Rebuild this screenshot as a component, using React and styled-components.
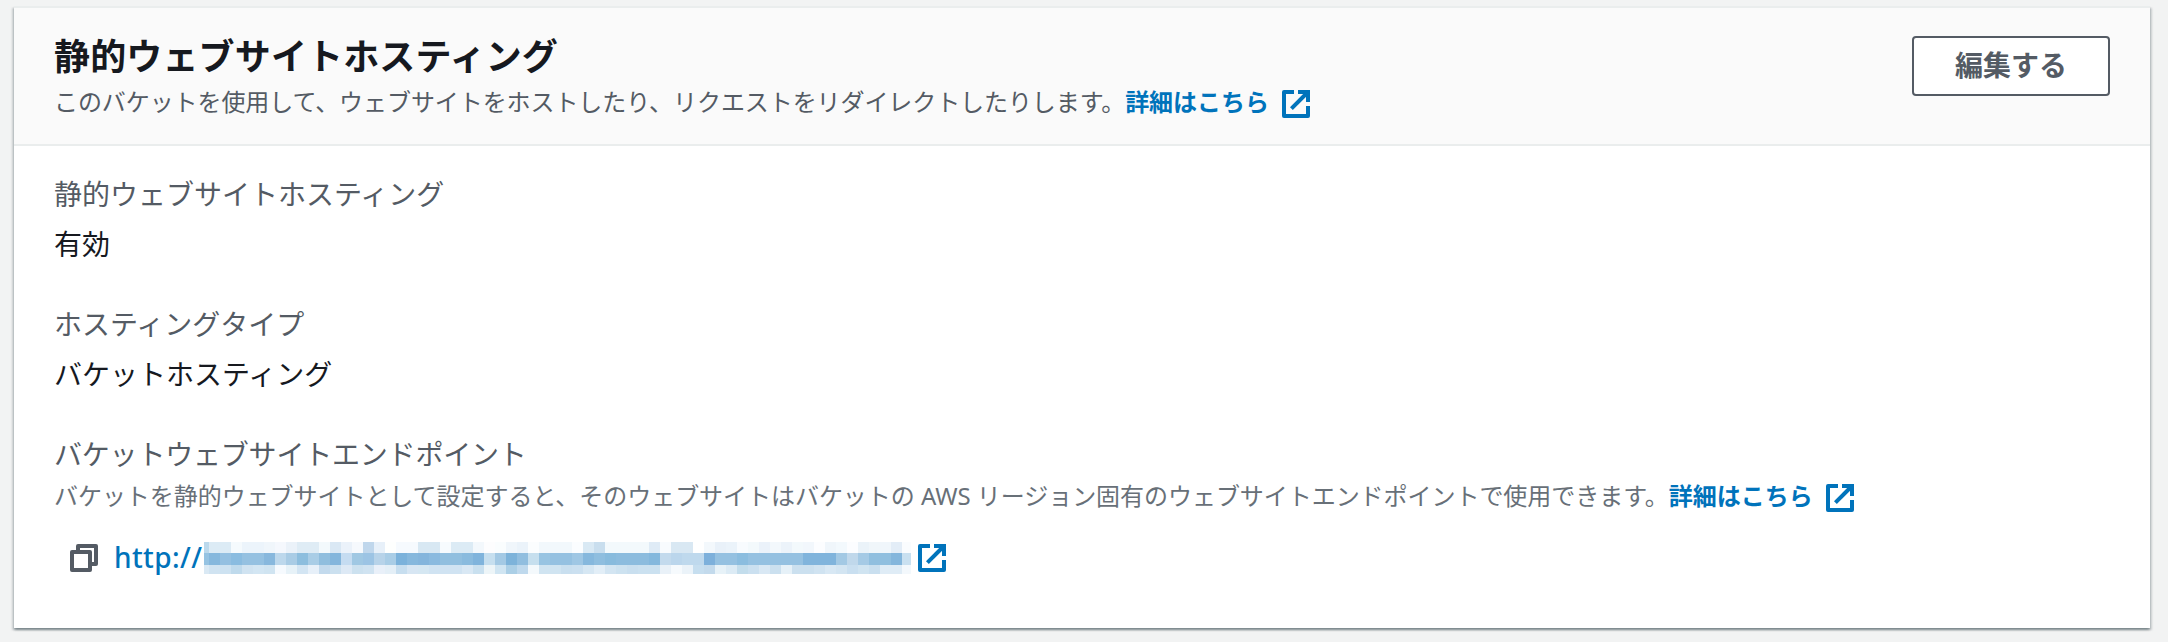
import styled, { createGlobalStyle } from "styled-components";

const GlobalStyle = createGlobalStyle`
  body {
    margin: 0;
    background: #f2f3f3;
    color: #16191f;
    font-family: "Noto Sans", "Noto Sans CJK JP", sans-serif;
    font-size: 28px;
    line-height: 44px;
  }
`;

const Page = styled.main`
  box-sizing: border-box;
  height: 642px;
  padding: 6px 18px 14px 14px;
  overflow: hidden;
`;

const Card = styled.section`
  box-sizing: border-box;
  height: 622px;
  border-top: 2px solid #eaeded;
  background: #fff;
  box-shadow: 0 2px 2px 0 rgba(0, 28, 36, 0.3),
    2px 2px 2px 0 rgba(0, 28, 36, 0.15), -2px 2px 2px 0 rgba(0, 28, 36, 0.15);
`;

const Header = styled.header`
  box-sizing: border-box;
  height: 138px;
  display: flex;
  justify-content: space-between;
  align-items: flex-start;
  padding: 24px 40px 0;
  border-bottom: 2px solid #eaeded;
  background: #fafafa;
`;

const Title = styled.h2`
  margin: 0;
  font-family: "Noto Sans CJK JP", sans-serif;
  font-size: 36px;
  line-height: 44px;
  font-weight: 700;
  letter-spacing: 0.15px;
  white-space: nowrap;
`;

const Description = styled.p`
  display: flex;
  align-items: center;
  margin: ${({ $top }) => $top}px 0 0;
  color: ${({ $muted }) => ($muted ? "#687078" : "#545b64")};
  font-size: 24px;
  line-height: 36px;
  letter-spacing: ${({ $spacing }) => $spacing}px;
  white-space: pre;
`;

const InfoLink = styled.a`
  display: inline-flex;
  align-items: center;
  gap: 11px;
  color: #0073bb;
  font-weight: 700;
  letter-spacing: 0;
  text-decoration: none;
`;

const Text = styled.span`
  padding-bottom: 4px;
`;

const EditButton = styled.button`
  box-sizing: border-box;
  width: 198px;
  height: 60px;
  margin-top: 4px;
  padding: 0 0 4px;
  border: 2px solid #545b64;
  border-radius: 4px;
  background: #fff;
  color: #545b64;
  font-family: "Noto Sans CJK JP", sans-serif;
  font-size: 28px;
  font-weight: 700;
  line-height: 40px;
`;

const Content = styled.div`
  display: flex;
  flex-direction: column;
  gap: 36px;
  padding: 26px 40px 0;
`;

const Label = styled.div`
  color: #545b64;
  letter-spacing: ${({ $spacing = 0 }) => $spacing}px;
`;

const Value = styled.div`
  margin-top: 6px;
`;

const Endpoint = styled.div`
  display: flex;
  align-items: center;
  height: 32px;
  margin: 24px 0 0 14px;
`;

const EndpointLink = styled.a`
  display: flex;
  align-items: center;
  margin-left: 14px;
  color: #0073bb;
  text-decoration: none;
`;

const Scheme = styled.span`
  width: 90px;
  padding-bottom: 2px;
  font-weight: 500;
  letter-spacing: 0.4px;
  white-space: nowrap;
`;

const Mosaic = styled.svg`
  display: block;
  margin-right: 5px;
`;

const Icon = styled.svg`
  display: block;
  flex: none;
  width: 32px;
  height: 32px;
  fill: none;
  stroke: ${({ $color }) => $color};
  stroke-width: 2;
`;

const ExternalIcon = () => (
  <Icon viewBox="0 0 16 16" $color="#0073bb">
    <path d="M9 2h5v5" />
    <path d="M5.7 10.3L14 2" />
    <path d="M14 9v5H2V2h5" strokeLinejoin="round" />
  </Icon>
);

const CopyIcon = () => (
  <Icon viewBox="0 0 16 16" $color="#545b64">
    <path d="M2 5h9v9H2z" strokeLinejoin="round" />
    <path d="M5 5V2h9v9h-3" strokeLinejoin="round" />
  </Icon>
);

// Masked host name: one colour per tile, in three rows.
const maskRows = [
  {
    y: 0,
    height: 11,
    tiles:
      "bcd9ec dcebf5 dcebf5 f5fafd ecf4fb ecf4fb f0f6fb f5f8fd ebf2f9 dfecf5 dfecf5 f3f9fc dae8f4 ebf2fa f6f9fd c0d7ec e7f0f9 fefffe f6fafe f6fafe d8e8f3 d8e8f3 f7fbfe dcebf5 dcebf5 f3f8fc fdfdfe fafdfe f0f6fb ebf3fa fbfdfe f2f8fc f2f8fc f2f8fc fbfdff d9e9f4 c9deee f3f9fc f3f9fc f3f9fc f3f9fc dfebf6 f8fbfe d9e8f3 d9e8f3 ffffff f3f8fc e9f1f9 ebf3fa f8fbfe f3f9fc ebf2fa f3f8fc ecf3fa f3f9fc f2f7fc fcfdff f0f6fb f3f9fd fcfdff ebf3f9 f0f6fa f0f6fb e3edf7 fafcfe",
  },
  {
    y: 11,
    height: 11.5,
    tiles:
      "96c3e2 86b8dd 94c0e1 8abce0 95c1e1 95c1e1 88b8dd bdd8ec a9cce5 8dbede a9cde6 90bede 84b6dc c5dcf1 a0c8e3 9cc4e4 b7d3e9 a9cde6 7bb2db 86b8dd 84b5dc 8abadf 91bfdf 91bfdf 8abbde 80b4dc c6dfef a3c9e4 7db3da 91bedf c6dfee 98c4e2 95c1e1 95c1e1 9fc7e4 86b8dd 8fbedf 88bbdd 8cbcde 8cbcde 8cbcde 84b8dd c3daed bbd6ec bfd9ed bfd9ed 7db0db 95c1e1 95c1e1 8bbddf 95c1e1 95c1e1 95c1e1 95c1e1 95c1e1 80b4dc 80b4dc 80b4dc a3c9e4 c0d8eb a5cae5 90bfdf 90bfdf 84b6dc c9e0f0",
  },
  {
    y: 22.5,
    height: 9.5,
    tiles:
      "dae9f4 d0e3f1 cde2f1 bfdaec d0e3f1 d3e6f3 d0e4f1 f6fafe e7f2f8 d3e5f3 e7f0f9 c3daed cbe0ef dde9f5 cce1ef d0e3f1 e9f0f9 e4eff7 c7deef d7e6f3 d5e7f2 d0e3f2 d0e3f2 d0e3f2 d9e8f4 c9e0ef edf5f8 d0e5f2 abcfe6 bfd9ed f4f9fc d0e4f1 d0e4f1 c9dfef cbe0f0 d6e7f3 e2eef7 d3e5f2 cde2f0 c9dfef cbe1f0 cbe1f0 e9f1f8 f6fafd ebf3f9 c6deef c3daec e7f2f8 dcebf5 c3ddec cbe0f0 d9e8f4 cbe0ef e6f1f8 cbe0ef cbe0ef d0e3f1 d8e8f4 d3e5f2 c9dff0 d0e4f1 c9dfef dfecf6 dfecf6 f3f8fc",
  },
];

const MaskedHost = () => (
  <Mosaic width="707" height="32" shapeRendering="crispEdges">
    {maskRows.map(({ y, height, tiles }) =>
      tiles.split(" ").map((color, i) => (
        <rect
          key={`${y}-${i}`}
          x={i === 0 ? 0 : 5 + (i - 1) * 11}
          y={y}
          width={i === 0 ? 5 : 11}
          height={height}
          fill={`#${color}`}
        />
      ))
    )}
  </Mosaic>
);

const LearnMore = () => (
  <InfoLink>
    <Text>詳細はこちら</Text>
    <ExternalIcon />
  </InfoLink>
);

const fields = [
  { label: "静的ウェブサイトホスティング", value: "有効" },
  { label: "ホスティングタイプ", value: "バケットホスティング" },
];

const App = () => (
  <>
    <GlobalStyle />
    <Page lang="ja">
      <Card>
        <Header>
          <div>
            <Title>静的ウェブサイトホスティング</Title>
            <Description $top={8} $spacing={-0.08}>
              <Text>
                このバケットを使用して、ウェブサイトをホストしたり、リクエストをリダイレクトしたりします。
              </Text>
              <LearnMore />
            </Description>
          </div>
          <EditButton>編集する</EditButton>
        </Header>
        <Content>
          {fields.map(({ label, value }) => (
            <div key={label}>
              <Label>{label}</Label>
              <Value>{value}</Value>
            </div>
          ))}
          <div>
            <Label $spacing={-0.2}>バケットウェブサイトエンドポイント</Label>
            <Description $top={2} $spacing={-0.045} $muted>
              <Text>
                バケットを静的ウェブサイトとして設定すると、そのウェブサイトはバケットの AWS リージョン固有のウェブサイトエンドポイントで使用できます。
              </Text>
              <LearnMore />
            </Description>
            <Endpoint>
              <CopyIcon />
              <EndpointLink>
                <Scheme>http://</Scheme>
                <MaskedHost />
                <ExternalIcon />
              </EndpointLink>
            </Endpoint>
          </div>
        </Content>
      </Card>
    </Page>
  </>
);

export default App;
